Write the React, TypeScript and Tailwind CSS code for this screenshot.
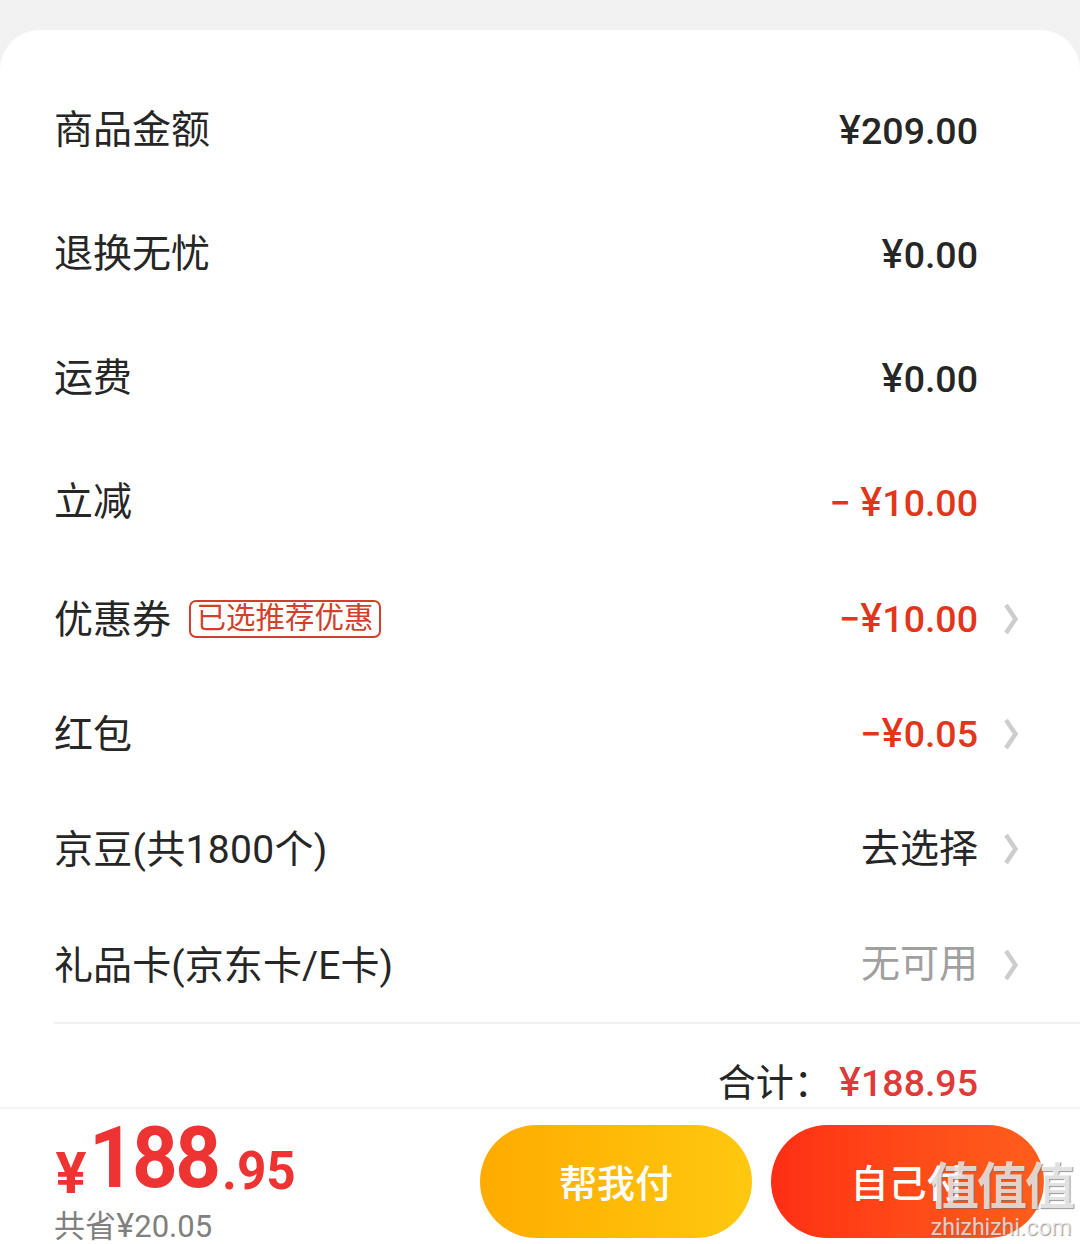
const Chevron = () => (
  <svg width="14" height="32" viewBox="0 0 14 32" fill="none" className="shrink-0">
    <polyline points="2,2 11.5,16 2,30" stroke="#cdcdcd" strokeWidth="4.5" />
  </svg>
);

// the yen sign in the shot is wider than Roboto's one
const Yen = () => <span className="text-[1.07em] leading-none [font-family:Inter,sans-serif]">¥</span>;

const Money = ({ text }: { text: string }) => {
  const [before, after] = text.split("¥");
  if (after === undefined) return <>{text}</>;
  return (
    <>
      {before}
      <Yen />
      {after}
    </>
  );
};

type RowProps = {
  label: string;
  labelClass?: string;
  tag?: string;
  value: string;
  valueClass?: string;
  arrow?: boolean;
  height: string;
};

const Row = ({ label, labelClass, tag, value, valueClass, arrow, height }: RowProps) => {
  return (
    <div className={`flex items-center justify-between pl-[54px] pr-[62px] ${height}`}>
      <div className="flex items-center">
        <span className={`text-[39px] leading-none text-[#262626] ${labelClass ?? ""}`}>{label}</span>
        {tag && (
          <span className="ml-[18px] flex h-[38px] w-[192px] items-center justify-center rounded-[7px] border-2 border-[#d2402c] pt-[1px] text-[29.5px] leading-none text-[#d2402c]">
            {tag}
          </span>
        )}
      </div>
      <div className="flex items-center">
        <span className={valueClass ?? "text-[37.5px] font-medium leading-none text-[#262626]"}>
          <Money text={value} />
        </span>
        <span className="ml-[26px] flex w-[14px] justify-center">{arrow && <Chevron />}</span>
      </div>
    </div>
  );
};

const red = "text-[37.5px] font-medium leading-none text-[#e2351a]";

export default function App() {
  return (
    <div className="relative flex h-[1244px] w-[1080px] flex-col overflow-hidden bg-[#f2f2f2] [font-family:Roboto,'Noto_Sans_CJK_SC',sans-serif]">
      <div className="mt-[30px] flex min-h-0 flex-1 flex-col rounded-t-[40px] bg-white pt-[38px]">
        <Row height="h-[124px]" label="商品金额" value="¥209.00" />
        <Row height="h-[124px]" label="退换无忧" value="¥0.00" labelClass="pt-[1px]" />
        <Row height="h-[124px]" label="运费" value="¥0.00" labelClass="pt-[1px]" />
        <Row height="h-[124px]" label="立减" value="− ¥10.00" valueClass={`${red} whitespace-pre`} labelClass="pt-[1px]" />
        <div className="-mt-[3px]">
          <Row height="h-[115px]" label="优惠券" labelClass="pt-[3px]" tag="已选推荐优惠" value="−¥10.00" valueClass={red} arrow />
          <Row height="h-[115px]" label="红包" labelClass="pt-[3px]" value="−¥0.05" valueClass={red} arrow />
          <Row
            height="h-[116px]"
            label="京豆(共1800个)"
            labelClass="pt-[3px] tracking-[0.3px]"
            value="去选择"
            valueClass="text-[39px] leading-none text-[#262626]"
            arrow
          />
          <Row
            height="h-[115px]"
            label="礼品卡(京东卡/E卡)"
            labelClass="pt-[3px] tracking-[0.1px]"
            value="无可用"
            valueClass="text-[39px] leading-none text-[#a0a0a0]"
            arrow
          />
        </div>
        <div className="ml-[54px] h-[2px] bg-[#f0f0f0]" />
        <div className="flex flex-1 items-start justify-end pr-[102px] pt-[40px]">
          <span className="mr-[7px] text-[38px] leading-none text-[#262626]">合计：</span>
          <span className="-mt-[2px] text-[37.5px] font-medium leading-none text-[#e0393a]">
            <Money text="¥188.95" />
          </span>
        </div>
      </div>

      <div className="flex h-[137px] shrink-0 border-t-2 border-[#f4f4f4] bg-white pl-[55px] pr-[36px]">
        <div className="flex flex-col">
          <div className="flex h-[92px] items-end font-bold leading-none text-[#ee3333]">
            <span className="mr-[2px] text-[56px] leading-[56px] [font-family:Inter,sans-serif]">¥</span>
            <span className="w-[126px] origin-left scale-x-[0.93] text-[86px] leading-[86px] tracking-[-3px]">188</span>
            <span className="mb-[2px] ml-[7px] origin-left scale-x-[0.95] text-[54px] leading-[56px]">.95</span>
          </div>
          <span className="-ml-[1px] mt-[8px] text-[31px] leading-none text-[#808080]">
            共省<Money text="¥20.05" />
          </span>
        </div>
        <div className="ml-auto flex gap-[19px] pt-[16px]">
          <button className="flex h-[113px] w-[272px] items-center justify-center rounded-full bg-gradient-to-r from-[#ffab00] to-[#ffc80f] pt-[5px] text-[38px] font-medium text-white">
            帮我付
          </button>
          <button className="flex h-[113px] w-[273px] items-center justify-center rounded-full bg-gradient-to-r from-[#ff2d14] to-[#ff5e1c] pt-[5px] text-[38px] font-medium text-white">
            自己付
          </button>
        </div>
      </div>

      {/* watermark */}
      <div className="absolute left-[926px] top-[1158px] flex w-[150px] flex-col items-center font-bold text-white/70 [text-shadow:1px_1px_1px_rgba(110,110,110,0.7)]">
        <span className="text-[50px] leading-[58px] tracking-[-2px]">值值值</span>
        <span className="text-[23px] leading-[24px] font-normal">zhizhizhi.com</span>
      </div>
    </div>
  );
}
